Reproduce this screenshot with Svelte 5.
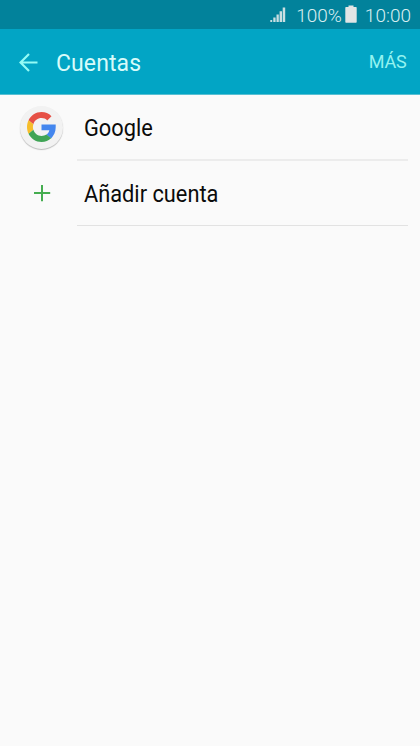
<script>
  const clock = '10:00';
  const battery = '100%';
</script>

<div class="screen">
  <div class="status">
    <svg class="signal" width="16" height="16" viewBox="0 0 16 16" aria-hidden="true">
      <path d="M.3 15v-2h1.900v2zM3.300 15v-4.500h2.300V15zM6.500 15V7.500h2.300V15zM9.600 15V4.200h2.400V15zM12.700 15V0.500h2.500V15z" />
    </svg>
    <span class="percent">{battery}</span>
    <svg class="battery" width="12" height="18" viewBox="0 0 12 18" aria-hidden="true">
      <path d="M3.500 .5h5V2H11a.7.7 0 0 1 .7.7v14.400a.7.7 0 0 1-.7.7H1a.7.7 0 0 1-.7-.7V2.700A.7.7 0 0 1 1 2h2.500z" />
    </svg>
    <span class="clock">{clock}</span>
  </div>

  <header>
    <svg class="back" width="19" height="19" viewBox="0 0 19 19" aria-hidden="true">
      <path d="M18.500 9.500H2M10 1L1.500 9.500L10 18" />
    </svg>
    <h1>Cuentas</h1>
    <span class="more">MÁS</span>
  </header>

  <main>
    <div class="row first">
      <div class="icon">
        <div class="badge">
          <svg width="29" height="30" viewBox="0 0 48 48" preserveAspectRatio="none" aria-hidden="true">
            <path fill="#e65045" d="M24 0c6.500 0 12 2.400 16.500 6.600l-7 6.900C31 11 28 9.700 24 9.700c-6.300 0-11.600 4-13.500 9.700L2.500 13.200C6.500 5.400 14.600 0 24 0z" />
            <path fill="#4386ee" d="M47.500 20v4.500c0 7.300-3 13.500-7.600 17.700l-7.700-6c2.500-1.700 4.200-4.200 4.800-7.200H24v-9z" />
            <path fill="#f6bd2a" d="M10.530 28.590c-.48-1.450-.76-2.990-.76-4.590s.27-3.140.76-4.590l-7.980-6.190C.92 16.460 0 20.120 0 24c0 3.880.92 7.540 2.560 10.780l7.970-6.190z" />
            <path fill="#3fa455" d="M24 48c6.480 0 11.930-2.130 15.890-5.810l-7.730-6c-2.150 1.450-4.920 2.300-8.160 2.300-6.260 0-11.570-4.220-13.470-9.910l-7.980 6.190C6.510 42.620 14.620 48 24 48z" />
          </svg>
        </div>
      </div>
      <div class="label"><span>Google</span></div>
    </div>
    <div class="row">
      <div class="icon">
        <svg class="plus" width="18" height="18" viewBox="0 0 18 18" aria-hidden="true">
          <path d="M9 1v16.200M1 9h16.200" />
        </svg>
      </div>
      <div class="label"><span>Añadir cuenta</span></div>
    </div>
  </main>
</div>

<style>
  :global(body) {
    margin: 0;
  }
  .screen {
    width: 420px;
    height: 746px;
    overflow: hidden;
    background: #fafafa;
    font-family: Roboto, sans-serif;
    display: flex;
    flex-direction: column;
  }
  .status {
    box-sizing: border-box;
    height: 29px;
    flex: none;
    display: flex;
    align-items: center;
    justify-content: flex-end;
    padding: 2px 9px 0 0;
    background: #02829b;
    color: #d9eef1;
    font-size: 19px;
    font-weight: 300;
    line-height: 26px;
  }
  .status svg {
    fill: #e1e5e5;
    display: block;
  }
  .status .signal {
    margin: 0 10px 1px 0;
    fill: #cadfe2;
  }
  .battery {
    margin: 0 8px 3px 3px;
  }
  header {
    box-sizing: border-box;
    height: 66px;
    flex: none;
    display: flex;
    align-items: center;
    padding: 1px 13.500px 0 19px;
    background: #02a5c5;
    border-bottom: 1px solid #58bfd2;
  }
  .back {
    fill: none;
    stroke: #94fbf5;
    stroke-width: 2.200;
  }
  h1 {
    margin: 4px 0 0 18px;
    flex: 1;
    color: #d8fbfa;
    font-size: 23px;
    font-weight: 400;
    line-height: 30px;
    letter-spacing: 0.1px;
  }
  .more {
    color: #94f3f0;
    font-size: 18px;
    line-height: 24px;
    letter-spacing: -0.2px;
  }
  .row {
    display: flex;
    height: 65px;
  }
  .row.first {
    height: 66px;
  }
  .icon {
    width: 77px;
    padding: 0 0 1px 7px;
    box-sizing: border-box;
    display: flex;
    align-items: center;
    justify-content: center;
  }
  .first .icon {
    padding-bottom: 2px;
  }
  .badge {
    width: 43px;
    height: 43px;
    margin-right: 1px;
    border-radius: 50%;
    background: #f2f2f2;
    box-shadow: 0 1px 1px #bcbcbc;
    display: flex;
    align-items: center;
    justify-content: center;
  }
  .plus {
    fill: none;
    stroke: #45ad50;
    stroke-width: 2;
  }
  .label {
    box-sizing: border-box;
    width: 331px;
    padding: 4px 0 0 7px;
    border-bottom: 1px solid #e2e2e2;
    display: flex;
    align-items: center;
    color: #0b0b0b;
    font-size: 23px;
    line-height: 30px;
  }
  .first .label {
    padding-top: 3px;
    border-bottom: 2px solid #ececec;
  }
  .label span {
    transform: scaleX(0.947);
    transform-origin: left;
  }
</style>
